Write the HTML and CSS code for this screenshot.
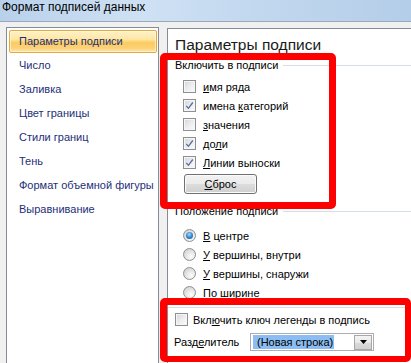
FILE: index.html
```html
<!DOCTYPE html>
<html lang="ru">
<head>
<meta charset="utf-8">
<title>Формат подписей данных</title>
<link rel="stylesheet" href="styles.css">
</head>
<body>
<div class="window">
  <div class="titlebar">Формат подписей данных</div>
  <div class="main">
    <ul class="nav">
      <li class="nav-item selected">Параметры подписи</li>
      <li class="nav-item">Число</li>
      <li class="nav-item">Заливка</li>
      <li class="nav-item">Цвет границы</li>
      <li class="nav-item">Стили границ</li>
      <li class="nav-item">Тень</li>
      <li class="nav-item">Формат объемной фигуры</li>
      <li class="nav-item">Выравнивание</li>
    </ul>
    <section class="panel">
      <h1 class="panel-title">Параметры подписи</h1>

      <div class="group">
        <div class="group-label"><span>Включить в подписи</span><i class="rule"></i></div>
        <div class="opts">
          <div class="opt"><span class="cb"></span><span><u>и</u>мя ряда</span></div>
          <div class="opt"><span class="cb"><svg class="tick" width="9" height="9" viewBox="0 0 9 9"><path d="M1.3 4.8 L3.4 7.3 L7.8 1.5" fill="none" stroke="#5a6b9c" stroke-width="1.3"/></svg></span><span>имена <u>к</u>атегорий</span></div>
          <div class="opt"><span class="cb"></span><span><u>з</u>начения</span></div>
          <div class="opt"><span class="cb"><svg class="tick" width="9" height="9" viewBox="0 0 9 9"><path d="M1.3 4.8 L3.4 7.3 L7.8 1.5" fill="none" stroke="#5a6b9c" stroke-width="1.3"/></svg></span><span>до<u>л</u>и</span></div>
          <div class="opt"><span class="cb"><svg class="tick" width="9" height="9" viewBox="0 0 9 9"><path d="M1.3 4.8 L3.4 7.3 L7.8 1.5" fill="none" stroke="#5a6b9c" stroke-width="1.3"/></svg></span><span><u>Л</u>инии выноски</span></div>
        </div>
        <button class="btn" type="button"><u>С</u>брос</button>
      </div>

      <div class="group group-pos">
        <div class="group-label"><span>Положение подписи</span><i class="rule"></i></div>
        <div class="radios">
          <div class="opt"><span class="rb on"></span><span><u>В</u> центре</span></div>
          <div class="opt"><span class="rb"></span><span><u>У</u> вершины, внутри</span></div>
          <div class="opt"><span class="rb"></span><span><u>У</u> вершины, снаружи</span></div>
          <div class="opt"><span class="rb"></span><span><u>П</u>о ширине</span></div>
        </div>
      </div>

      <div class="group group-extra">
        <div class="opt opt-legend"><span class="cb"></span><span>Вкл<u>ю</u>чить ключ легенды в подпись</span></div>
        <div class="sep-row">
          <span class="sep-label">Разд<u>е</u>литель</span>
          <div class="combo">
            <span class="combo-value">(Новая строка)</span>
            <span class="combo-btn"><svg width="7" height="4" viewBox="0 0 7 4"><polygon points="0,0 7,0 3.5,4" fill="#000"/></svg></span>
          </div>
        </div>
      </div>
    </section>
  </div>
  <div class="mark mark-1"></div>
  <div class="mark mark-2"></div>
</div>
</body>
</html>
```

FILE: styles.css
```css
html, body {
  margin: 0;
  padding: 0;
}

body {
  background: #f0f0f0;
  font-family: "Liberation Sans", Arial, sans-serif;
  font-size: 11px;
  color: #000;
}

.window {
  position: relative;
  width: 411px;
  height: 363px;
  overflow: hidden;
  background: #f0f0f0;
}

.titlebar {
  height: 22px;
  box-sizing: border-box;
  padding-left: 2px;
  font-size: 12px;
  line-height: 14px;
  color: #000;
  background: linear-gradient(to right, #b8d1eb 0%, #cfe1f4 35%, #c2d8ef 62%, #b4cde8 100%);
  border-bottom: 1px solid #9aa8b7;
}

.main {
  display: flex;
  gap: 8px;
  padding-left: 6px;
}

.nav {
  flex: none;
  list-style: none;
  margin: 5px 0 0;
  padding: 2px 0 0;
  width: 153px;
  height: 400px;
  box-sizing: border-box;
  border: 1px solid #868c94;
  background: #fff;
}

.nav-item {
  height: 23px;
  box-sizing: border-box;
  margin: 0 1px 1px 2px;
  padding-left: 9px;
  line-height: 21px;
  color: #1e2f78;
  border: 1px solid transparent;
  border-radius: 2px;
}

.nav-item.selected {
  border-color: #e2a946;
  background: linear-gradient(#fff2c8 0%, #fee6a2 40%, #fccb5e 56%, #fcd27a 82%, #fde6a8 100%);
  box-shadow: inset 0 0 0 1px rgba(255, 250, 225, 0.6);
}

.panel {
  flex: none;
  margin-top: 6px;
  width: 270px;
  height: 400px;
  box-sizing: border-box;
  background: #fff;
  border-left: 1px solid #868c94;
  border-top: 1px solid #868c94;
}

.panel-title {
  margin: 6px 0 0 7px;
  font-size: 15.5px;
  line-height: 20px;
  font-weight: normal;
  color: #1a1a1a;
}

.group-label {
  display: flex;
  align-items: center;
  height: 16px;
  margin-top: 2px;
  padding-left: 7px;
}

.rule {
  flex: 1;
  height: 1px;
  margin-left: 5px;
  background: #d5dfe5;
}

.opts {
  margin-top: 4px;
  padding-left: 15px;
}

.opt {
  display: flex;
  align-items: center;
  gap: 7px;
  height: 19px;
}

.cb {
  flex: none;
  width: 13px;
  height: 13px;
  box-sizing: border-box;
  border: 1px solid #8e8f8f;
  background: linear-gradient(135deg, #d3d6da 0%, #eceef0 55%, #fbfbfb 100%);
  box-shadow: inset 0 0 0 1px #f6f6f6;
  display: flex;
  align-items: center;
  justify-content: center;
}

.tick {
  display: block;
}

.btn {
  display: block;
  margin: 2px 0 0 16px;
  width: 73px;
  height: 20px;
  padding: 0;
  font: inherit;
  color: #000;
  border: 1px solid #707070;
  border-radius: 3px;
  background: linear-gradient(#f2f2f2 0%, #ebebeb 50%, #dddddd 51%, #cfcfcf 100%);
  box-shadow: inset 0 0 0 1px #fbfbfb;
}

.group-pos {
  margin-top: 9px;
}

.group-pos .group-label {
  margin-top: 0;
}

.radios {
  margin-top: 7px;
  padding-left: 15px;
}

.rb {
  flex: none;
  width: 13px;
  height: 13px;
  box-sizing: border-box;
  border: 1px solid #8e8f8f;
  border-radius: 50%;
  background: radial-gradient(circle at 65% 70%, #fdfdfd 0%, #e6e6e6 45%, #c9c9c9 100%);
  display: flex;
  align-items: center;
  justify-content: center;
}

.rb.on::before {
  content: "";
  width: 7px;
  height: 7px;
  border-radius: 50%;
  background: radial-gradient(circle at 45% 35%, #a8dcfb 0%, #3b8fd6 45%, #104c8f 100%);
}

.group-extra {
  margin-top: 5px;
  border-top: 1px solid #d5dfe5;
  padding-top: 2px;
}

.opt-legend {
  padding-left: 7px;
  gap: 5px;
}

.sep-row {
  display: flex;
  align-items: center;
  height: 22px;
  margin-top: 2px;
  padding-left: 6px;
}

.sep-label {
  width: 76px;
  flex: none;
}

.combo {
  display: flex;
  align-items: center;
  width: 124px;
  height: 18px;
  box-sizing: border-box;
  border: 1px solid #abadb3;
  background: #fff;
  padding-left: 2px;
}

.combo-value {
  background: #8bbdf2;
  line-height: 14px;
  padding: 0 1px 0 4px;
}

.combo-btn {
  margin-left: auto;
  margin-right: 1px;
  width: 18px;
  height: 15px;
  box-sizing: border-box;
  border: 1px solid #a7a7a7;
  background: linear-gradient(#f4f4f4 0%, #e8e8e8 50%, #dadada 51%, #d0d0d0 100%);
  display: flex;
  align-items: center;
  justify-content: center;
}

.combo-btn svg {
  display: block;
}

.mark {
  position: absolute;
  box-sizing: border-box;
  border: 7px solid #ff0000;
  border-radius: 5px;
  pointer-events: none;
}

.mark-1 {
  left: 160px;
  top: 53px;
  width: 176px;
  height: 156px;
}

.mark-2 {
  left: 160px;
  top: 298px;
  width: 251px;
  height: 64px;
  border-width: 7px 6px 6px 7px;
}
```
